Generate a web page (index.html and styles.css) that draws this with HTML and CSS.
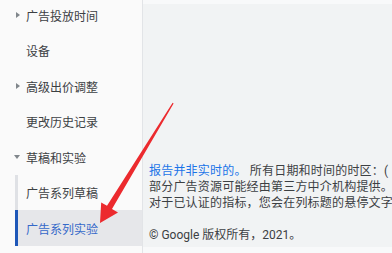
FILE: index.html
```html
<!DOCTYPE html>
<html lang="zh-CN">
<head>
  <meta charset="UTF-8">
  <title>广告系列实验</title>
  <link rel="stylesheet" href="styles.css">
</head>
<body>
  <div class="page">
    <nav class="sidebar">
      <div class="nav-item"><span class="caret"></span>广告投放时间</div>
      <div class="nav-item">设备</div>
      <div class="nav-item"><span class="caret"></span>高级出价调整</div>
      <div class="nav-item">更改历史记录</div>
      <div class="nav-item"><span class="caret open"></span>草稿和实验</div>
      <div class="sub-list">
        <div class="sub-item">广告系列草稿</div>
        <div class="sub-item active">广告系列实验</div>
      </div>
    </nav>

    <main class="main">
      <div class="notes">
        <p><a class="link">报告并非实时的。</a> 所有日期和时间的时区：(</p>
        <p>部分广告资源可能经由第三方中介机构提供。</p>
        <p>对于已认证的指标，您会在列标题的悬停文字</p>
      </div>
      <div class="copyright">© Google 版权所有，2021。</div>
    </main>
  </div>

  <!-- annotation arrow over the page -->
  <svg class="arrow" width="392" height="253" viewBox="0 0 392 253">
    <polygon fill="#ec2a2e" points="100,223 118,212.5 112,209 173.6,103.4 172.6,102.8 107,205.8 101.2,202.4"/>
  </svg>
</body>
</html>
```

FILE: styles.css
```css
body {
  margin: 0;
  width: 392px;
  height: 253px;
  overflow: hidden;
  font-family: Roboto, "Noto Sans CJK SC", sans-serif;
  font-size: 12px;
  color: #3c4043;
  background-color: #f8f9fa;
  position: relative;
}
.page {
  display: flex;
  height: 253px;
}
.sidebar {
  width: 142px;
  flex-shrink: 0;
  background-color: #fafafa;
  border-right: 1px solid #e2e4e7;
  margin-top: -2.75px;
}
.nav-item {
  height: 35.5px;
  display: flex;
  align-items: center;
  padding-left: 26px;
  position: relative;
  white-space: nowrap;
}
.caret {
  position: absolute;
  left: 16px;
  top: 15px;
  width: 0;
  height: 0;
  border-top: 3px solid transparent;
  border-bottom: 3px solid transparent;
  border-left: 4px solid #80868b;
}
.caret.open {
  left: 14px;
  top: 16px;
  border-left: 3px solid transparent;
  border-right: 3px solid transparent;
  border-top: 4px solid #80868b;
  border-bottom: none;
}
.sub-list {
  margin-left: 15px;
}
.sub-item {
  height: 35.5px;
  display: flex;
  align-items: center;
  padding-left: 8px;
  border-left: 3px solid #dfe1e5;
  white-space: nowrap;
}
.sub-item.active {
  border-left-color: #1e57b8;
  background-color: #e6e7ea;
  color: #3569c9;
}
.main {
  flex: 1;
  min-width: 0;
  height: 243px;
  margin-top: 4px;
  background-color: #f1f3f4;
  padding-left: 6px;
  overflow: hidden;
  white-space: nowrap;
}
.notes {
  padding-top: 159px;
}
.notes p {
  margin: 0;
  line-height: 16px;
  letter-spacing: 0.2px;
}
.link {
  color: #1a73e8;
}
.copyright {
  margin-top: 16px;
  line-height: 16px;
  color: #3c4043;
}
.arrow {
  position: absolute;
  left: 0;
  top: 0;
}
```
